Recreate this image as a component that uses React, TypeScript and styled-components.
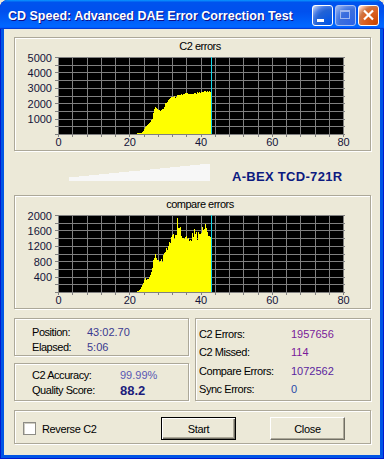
import React from 'react';
import styled, { createGlobalStyle } from 'styled-components';

const UI_FONT = '"Liberation Sans", Arial, sans-serif';

const GlobalStyle = createGlobalStyle`
  html, body {
    margin: 0;
    padding: 0;
    width: 384px;
    height: 459px;
    overflow: hidden;
    background: #ece9d8;
  }
  * {
    box-sizing: border-box;
  }
`;

const Window = styled.div`
  width: 384px;
  height: 459px;
  display: flex;
  flex-direction: column;
  background: #0055e5;
  border-radius: 8px 8px 0 0;
  overflow: hidden;
  font-family: ${UI_FONT};
  box-shadow: inset 1px 0 #0019cf, inset -1px 0 #0019cf, inset 0 -1px #0019cf;
`;

const TitleBar = styled.div`
  height: 29px;
  flex-shrink: 0;
  display: flex;
  align-items: center;
  padding: 2px 5px 0 8px;
  background: linear-gradient(180deg, #0997ff 0%, #0053ee 8%, #0050ee 40%, #0066ff 88%, #0066ff 93%, #005bff 95%, #003dd7 96%, #003dd7 100%);
`;

const Title = styled.div`
  flex: 1;
  color: #fff;
  font-weight: bold;
  font-size: 12.5px;
  white-space: nowrap;
  text-shadow: 1px 1px #0f1089;
`;

const CaptionButtons = styled.div`
  display: flex;
  gap: 2px;
`;

const CaptionButton = styled.div<{ $kind: 'min' | 'max' | 'close' }>`
  width: 21px;
  height: 21px;
  border-radius: 3px;
  border: 1px solid ${p => (p.$kind === 'max' ? '#a9c0f5' : '#fff')};
  background: ${p =>
    p.$kind === 'close'
      ? 'radial-gradient(circle at 90% 90%, #cc4600 0, #dc6527 55%, #cd7546 70%, #ffccb2 90%, #fff 100%)'
      : p.$kind === 'min'
      ? 'radial-gradient(circle at 90% 90%, #0054e9 0, #2263d5 55%, #4479e4 70%, #a3bbec 90%, #fff 100%)'
      : 'radial-gradient(circle at 90% 90%, #2d63e6 0, #3c6fdd 55%, #5685e6 70%, #9db6ec 95%)'};
  svg {
    display: block;
  }
`;

const Client = styled.div`
  flex: 1;
  margin: 0 4px 4px;
  background: #ece9d8;
  padding: 8px 9px 0 10px;
  display: flex;
  flex-direction: column;
`;

const GroupBox = styled.div<{ $height: number }>`
  height: ${p => p.$height}px;
  border: 1px solid #aca899;
  box-shadow: inset 1px 1px 0 #fff, 1px 1px 0 #fff;
`;

const ChartCaption = styled.div`
  height: 12px;
  margin-top: 2px;
  padding-left: 15px;
  line-height: 12px;
  font-size: 11px;
  letter-spacing: -0.5px;
  text-align: center;
  color: #000;
`;

const ChartSvg = styled.svg`
  display: block;
`;

const Band = styled.div`
  height: 44px;
  display: flex;
  align-items: flex-start;
  padding-top: 13px;
`;

const Wedge = styled.svg`
  display: block;
  margin-left: 55px;
`;

const ModelName = styled.div`
  margin-left: 22px;
  margin-top: 5px;
  line-height: 16px;
  font-size: 13px;
  font-weight: bold;
  letter-spacing: 0.3px;
  color: #0c1a80;
`;

const StatsRow = styled.div`
  margin-top: 9px;
  display: grid;
  grid-template-columns: 175px 176px;
  column-gap: 6px;
`;

const StatsColumn = styled.div`
  display: flex;
  flex-direction: column;
  gap: 7px;
`;

const StatPanel = styled(GroupBox)<{ $padTop: number; $padLeft: number }>`
  padding: ${p => p.$padTop}px 0 0 ${p => p.$padLeft}px;
`;

const StatRow = styled.div<{ $labelWidth: number; $rowHeight: number }>`
  display: grid;
  grid-template-columns: ${p => p.$labelWidth}px auto;
  height: ${p => p.$rowHeight}px;
  line-height: ${p => p.$rowHeight}px;
  font-size: 11px;
  white-space: nowrap;
`;

const StatLabel = styled.span`
  color: #000;
  letter-spacing: -0.45px;
`;

const StatValue = styled.span<{ $color: string; $bold?: boolean }>`
  color: ${p => p.$color};
  font-size: ${p => (p.$bold ? '13px' : '11px')};
  font-weight: ${p => (p.$bold ? 'bold' : 'normal')};
`;

const Footer = styled(GroupBox)`
  margin-top: 9px;
  display: flex;
  align-items: center;
  padding: 3px 0 0 8px;
`;

const CheckArea = styled.label`
  width: 138px;
  display: flex;
  align-items: center;
  gap: 6px;
  font-size: 11px;
  letter-spacing: -0.35px;
  color: #000;
`;

const CheckBox = styled.span`
  width: 13px;
  height: 13px;
  background: #fff;
  border: 1px solid #8d8c86;
  box-shadow: inset 1px 1px 0 #cfcdc2;
`;

const PushButton = styled.div<{ $isDefault?: boolean; $gap?: number }>`
  width: 75px;
  height: 23px;
  margin-left: ${p => p.$gap ?? 0}px;
  display: flex;
  align-items: center;
  justify-content: center;
  font-size: 11px;
  letter-spacing: -0.3px;
  color: #000;
  background: #ece9d8;
  border: 1px solid ${p => (p.$isDefault ? '#000' : 'transparent')};
  box-shadow: ${p =>
    p.$isDefault
      ? 'inset 1px 1px 0 #fff, inset -1px -1px 0 #716f64, inset -2px -2px 0 #aca899'
      : 'inset 0 0 0 0 #fff'};
  ${p =>
    !p.$isDefault &&
    `
    border-color: #fff #716f64 #716f64 #fff;
    box-shadow: inset -1px -1px 0 #aca899;
  `}
`;

type Pt = [number, number];

const PLOT = { x0: 43, x1: 328, y0: 5, y1: 82 };
const SVG_LEFT = 15;

function makeRand(seed: number) {
  let s = seed;
  return () => {
    s = (s * 16807) % 2147483647;
    return (s - 1) / 2147483646;
  };
}

function interp(pts: Pt[], x: number) {
  if (x <= pts[0][0]) return pts[0][1];
  for (let i = 1; i < pts.length; i++) {
    if (x <= pts[i][0]) {
      const [ax, ay] = pts[i - 1];
      const [bx, by] = pts[i];
      return ay + ((by - ay) * (x - ax)) / (bx - ax);
    }
  }
  return pts[pts.length - 1][1];
}

function barsPath(pts: Pt[], max: number, noise: number, seed: number) {
  const rand = makeRand(seed);
  const start = pts[0][0] - SVG_LEFT;
  const end = 211 - SVG_LEFT;
  const h = PLOT.y1 - PLOT.y0;
  let d = `M${start},${PLOT.y1}`;
  for (let x = start; x < end; x++) {
    const base = interp(pts, x + SVG_LEFT);
    const v = Math.max(0, base * (1 + noise * (rand() * 2 - 1)));
    const top = Math.round(PLOT.y1 - (v / max) * h);
    d += ` L${x},${top} L${x + 1},${top}`;
  }
  d += ` L${end},${PLOT.y1} Z`;
  return d;
}

const c2Points: Pt[] = [
  [133, 0], [136, 30], [138, 60], [141, 80], [143, 200], [145, 450], [147, 600],
  [150, 800], [152, 1000], [153, 1300], [154, 1600], [155, 1800], [157, 1600],
  [160, 1500], [163, 1650], [165, 1950], [167, 2150], [170, 2350], [174, 2400],
  [177, 2500], [182, 2580], [187, 2630], [195, 2640], [200, 2650], [203, 2720],
  [206, 2760], [211, 2790],
];

const comparePoints: Pt[] = [
  [135, 0], [137, 20], [139, 40], [141, 120], [143, 260], [145, 340], [147, 330],
  [149, 380], [151, 500], [152, 650], [153, 800], [154, 940], [156, 900], [158, 800],
  [160, 820], [162, 800], [163, 900], [165, 1080], [167, 1150], [169, 1250],
  [171, 1400], [172, 1500], [174, 1420], [176, 1480], [177, 1950], [178, 1700],
  [180, 1750], [181, 1450], [184, 1380], [188, 1400], [191, 1420], [193, 1500],
  [195, 1600], [197, 1450], [199, 1500], [201, 1600], [203, 1650], [205, 1750],
  [206, 1580], [208, 1500], [210, 1450], [211, 1440],
];

interface ChartProps {
  caption: string;
  max: number;
  step: number;
  points: Pt[];
  noise: number;
  seed: number;
}

const ErrorChart: React.FC<ChartProps> = ({ caption, max, step, points, noise, seed }) => {
  const { x0, x1, y0, y1 } = PLOT;
  const vLines = Array.from({ length: 21 }, (_, i) => Math.round(x0 + (i * (x1 - x0)) / 20));
  const hLines = Array.from({ length: 11 }, (_, j) => Math.round(y0 + (j * (y1 - y0)) / 10));
  const yLabels: number[] = [];
  for (let v = max; v > 0; v -= step) yLabels.push(v);
  const path = barsPath(points, max, noise, seed);

  return (
    <GroupBox $height={114}>
      <ChartCaption>{caption}</ChartCaption>
      <ChartSvg width={355} height={98}>
        <rect x={x0} y={y0} width={x1 - x0 + 1} height={y1 - y0 + 1} fill="#000" />
        {vLines.map(x => (
          <rect key={`v${x}`} x={x} y={y0} width={1} height={y1 - y0 + 3} fill="#808080" />
        ))}
        {hLines.map(y => (
          <rect key={`h${y}`} x={x0 - 3} y={y} width={x1 - x0 + 5} height={1} fill="#808080" />
        ))}
        <path d={path} fill="#ffff00" />
        <rect x={211 - SVG_LEFT} y={y0} width={1} height={y1 - y0} fill="#12d6e8" />
        {yLabels.map(v => (
          <text
            key={v}
            x={37}
            y={y1 - (v / max) * (y1 - y0) + 4.5}
            textAnchor="end"
            fontFamily={UI_FONT}
            fontSize={11}
            fill="#141438"
          >
            {v}
          </text>
        ))}
        {[0, 20, 40, 60, 80].map(u => (
          <text
            key={u}
            x={x0 + (u / 80) * (x1 - x0) + 0.5}
            y={94}
            textAnchor="middle"
            fontFamily={UI_FONT}
            fontSize={11}
            fill="#141438"
          >
            {u}
          </text>
        ))}
      </ChartSvg>
    </GroupBox>
  );
};

function wedgePath() {
  const w = 141;
  const hgt = 17;
  const steps = 14;
  let d = `M0,${hgt}`;
  for (let i = 0; i < steps; i++) {
    const xa = Math.round((i * w) / steps);
    const xb = Math.round(((i + 1) * w) / steps);
    const top = hgt - Math.round(4 + (i * 13) / (steps - 1));
    d += ` L${xa},${top} L${xb},${top}`;
  }
  d += ` L${w},${hgt} Z`;
  return d;
}

const App: React.FC = () => (
  <>
    <GlobalStyle />
    <Window>
      <TitleBar>
        <Title>CD Speed: Advanced DAE Error Correction Test</Title>
        <CaptionButtons>
          <CaptionButton $kind="min">
            <svg width={19} height={19}>
              <rect x={4} y={13} width={7} height={3} fill="#fff" />
            </svg>
          </CaptionButton>
          <CaptionButton $kind="max">
            <svg width={19} height={19}>
              <rect x={4.5} y={4.5} width={9} height={8} fill="none" stroke="#9fb8f0" />
              <rect x={4} y={4} width={10} height={2} fill="#9fb8f0" />
            </svg>
          </CaptionButton>
          <CaptionButton $kind="close">
            <svg width={19} height={19}>
              <path d="M5 4.5 L14 13.5 M14 4.5 L5 13.5" stroke="#fff" strokeWidth={2.2} />
            </svg>
          </CaptionButton>
        </CaptionButtons>
      </TitleBar>
      <Client>
        <ErrorChart caption="C2 errors" max={5000} step={1000} points={c2Points} noise={0.03} seed={7} />
        <Band>
          <Wedge width={141} height={17}>
            <path d={wedgePath()} fill="#f7f7f7" />
          </Wedge>
          <ModelName>A-BEX TCD-721R</ModelName>
        </Band>
        <ErrorChart
          caption="compare errors"
          max={2000}
          step={400}
          points={comparePoints}
          noise={0.07}
          seed={31}
        />
        <StatsRow>
          <StatsColumn>
            <StatPanel $height={38} $padTop={6} $padLeft={17}>
              <StatRow $labelWidth={55} $rowHeight={15}>
                <StatLabel>Position:</StatLabel>
                <StatValue $color="#3a3a90">43:02.70</StatValue>
              </StatRow>
              <StatRow $labelWidth={55} $rowHeight={15}>
                <StatLabel>Elapsed:</StatLabel>
                <StatValue $color="#3a3a90">5:06</StatValue>
              </StatRow>
            </StatPanel>
            <StatPanel $height={38} $padTop={4} $padLeft={17}>
              <StatRow $labelWidth={88} $rowHeight={15}>
                <StatLabel>C2 Accuracy:</StatLabel>
                <StatValue $color="#5858b4">99.99%</StatValue>
              </StatRow>
              <StatRow $labelWidth={88} $rowHeight={15}>
                <StatLabel>Quality Score:</StatLabel>
                <StatValue $color="#1c1c7c" $bold>
                  88.2
                </StatValue>
              </StatRow>
            </StatPanel>
          </StatsColumn>
          <StatPanel $height={83} $padTop={6} $padLeft={3}>
            <StatRow $labelWidth={92} $rowHeight={18.3}>
              <StatLabel>C2 Errors:</StatLabel>
              <StatValue $color="#7a1a9a">1957656</StatValue>
            </StatRow>
            <StatRow $labelWidth={92} $rowHeight={18.3}>
              <StatLabel>C2 Missed:</StatLabel>
              <StatValue $color="#7a1a9a">114</StatValue>
            </StatRow>
            <StatRow $labelWidth={92} $rowHeight={18.3}>
              <StatLabel>Compare Errors:</StatLabel>
              <StatValue $color="#5b1f9f">1072562</StatValue>
            </StatRow>
            <StatRow $labelWidth={92} $rowHeight={18.3}>
              <StatLabel>Sync Errors:</StatLabel>
              <StatValue $color="#2848a8">0</StatValue>
            </StatRow>
          </StatPanel>
        </StatsRow>
        <Footer $height={34}>
          <CheckArea>
            <CheckBox />
            Reverse C2
          </CheckArea>
          <PushButton $isDefault>Start</PushButton>
          <PushButton $gap={34}>Close</PushButton>
        </Footer>
      </Client>
    </Window>
  </>
);

export default App;
